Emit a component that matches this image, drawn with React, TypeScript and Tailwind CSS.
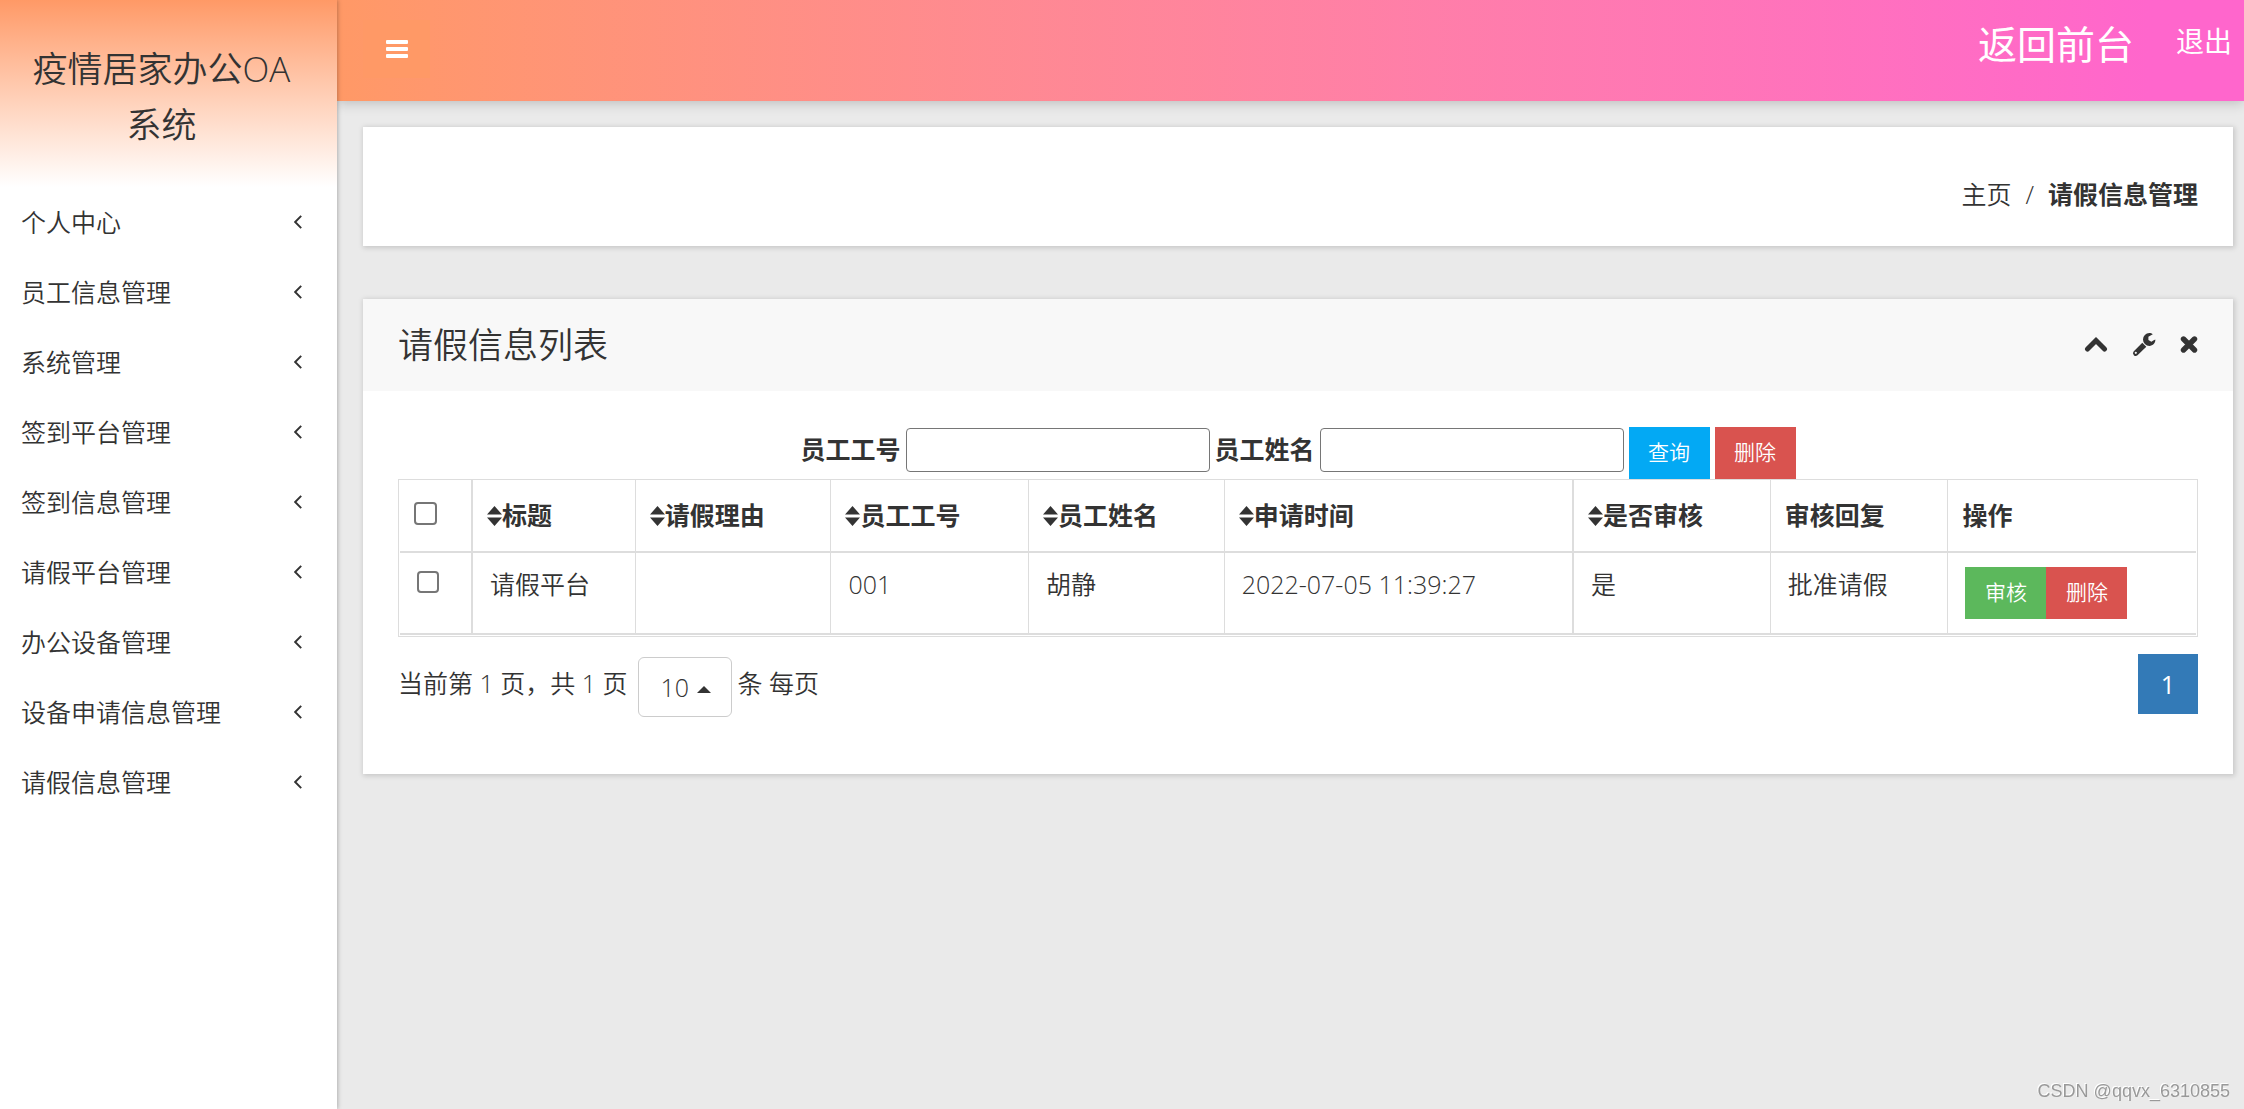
import { useState } from "react";

type Leave = {
  id: number;
  title: string;
  reason: string;
  jobNo: string;
  name: string;
  appliedAt: string;
  approved: string;
  reply: string;
};

const menus = [
  "个人中心",
  "员工信息管理",
  "系统管理",
  "签到平台管理",
  "签到信息管理",
  "请假平台管理",
  "办公设备管理",
  "设备申请信息管理",
  "请假信息管理",
];

const columns = [
  { label: "标题", sortable: true, className: "w-[9%]" },
  { label: "请假理由", sortable: true, className: "w-[10.9%] border-l" },
  { label: "员工工号", sortable: true, className: "w-[11%] border-l" },
  { label: "员工姓名", sortable: true, className: "w-[10.9%] border-l" },
  { label: "申请时间", sortable: true, className: "w-[19.4%] border-l" },
  { label: "是否审核", sortable: true, className: "w-[11%] border-l-2" },
  { label: "审核回复", sortable: false, className: "w-[9.9%] border-l" },
  { label: "操作", sortable: false, className: "border-l" },
];

const rows: Leave[] = [
  {
    id: 1,
    title: "请假平台",
    reason: "",
    jobNo: "001",
    name: "胡静",
    appliedAt: "2022-07-05 11:39:27",
    approved: "是",
    reply: "批准请假",
  },
];

const card = "bg-white shadow-[1px_1px_5px_1px_rgba(0,0,0,0.15)]";
const td = "border-b-2 border-[#ddd] px-[17px] py-3.5";
const btn = "h-[52px] w-[81px] pb-0.5 text-[21px] text-white";

function SortIcon() {
  return (
    <svg className="h-5 w-[15px] shrink-0" viewBox="0 0 15 20" fill="currentColor" aria-hidden="true">
      <path d="M7.500 0L15 8.500H0zM7.500 20L15 11.500H0z" />
    </svg>
  );
}

function BarsIcon() {
  return (
    <svg className="h-[18px] w-[22px]" viewBox="0 0 22 18" fill="currentColor" aria-hidden="true">
      <rect width="22" height="4" rx="1" />
      <rect y="7" width="22" height="4" rx="1" />
      <rect y="14" width="22" height="4" rx="1" />
    </svg>
  );
}

function AngleLeftIcon() {
  return (
    <svg className="h-3.5 w-2" viewBox="0 0 8 14" fill="none" stroke="currentColor" strokeWidth="1.9" aria-hidden="true">
      <path d="M7.200 0.800L1.200 7l6 6.200" />
    </svg>
  );
}

function ChevronUpIcon() {
  return (
    <svg className="h-6 w-6" viewBox="0 0 24 24" fill="none" stroke="currentColor" strokeWidth="5" aria-hidden="true">
      <path d="M3.500 16l8.500-8.500 8.500 8.500" strokeLinecap="round" />
    </svg>
  );
}

function WrenchIcon() {
  return (
    <svg className="h-6 w-6" viewBox="0 0 24 24" fill="currentColor" aria-hidden="true">
      <path
        fillRule="evenodd"
        d="M10.3 9.7l4 4-8.8 8.600a2.700 2.700 0 0 1-3.900-3.700zM4.900 19.800a1.100 1.100 0 1 0-2.200 0 1.100 1.100 0 0 0 2.200 0z"
      />
      <path d="M20.800 1.200l-4.400 2.500v3.300l3 1.700c1.200-.6 2.600-1.600 3.900-2.200.5 3.200-2.600 6.400-5.900 6.400a6.500 6.500 0 0 1-6.400-6.500A6.400 6.400 0 0 1 17.300 0c1.300 0 2.600.4 3.500 1.200z" />
    </svg>
  );
}

function CloseIcon() {
  return (
    <svg className="h-[18px] w-[18px]" viewBox="0 0 18 18" stroke="currentColor" strokeWidth="5.400" aria-hidden="true">
      <path d="M3.500 3l11 11M14.500 3l-11 11" strokeLinecap="round" />
    </svg>
  );
}

export default function App() {
  const [jobNo, setJobNo] = useState("");
  const [name, setName] = useState("");
  const [pageSize, setPageSize] = useState("10");
  const [selected, setSelected] = useState<number[]>([]);

  const toggle = (id: number) => {
    setSelected((prev) => (prev.includes(id) ? prev.filter((x) => x !== id) : [...prev, id]));
  };

  const toggleAll = () => {
    setSelected(selected.length === rows.length ? [] : rows.map((r) => r.id));
  };

  return (
    <div className="flex min-h-screen bg-[#eaeaea] font-['Open_Sans','Noto_Sans_CJK_SC',sans-serif] text-[25px] leading-[35px] font-[350] text-[#333]">
      <aside className="z-10 w-[337px] shrink-0 bg-white shadow-[1px_0_4px_rgba(0,0,0,0.25)]">
        <div className="h-[187px] bg-linear-to-b from-[#ff9966] to-white pt-[41px] pr-6 pl-2.5">
          <h1 className="text-center text-[35px] leading-[56px]">
            疫情居家办公OA
            <br />
            系统
          </h1>
        </div>
        <nav>
          <ul>
            {menus.map((menu) => (
              <li key={menu}>
                <a href="#" className="flex h-[70px] items-center justify-between pr-[35px] pl-[21px]">
                  <span>{menu}</span>
                  <AngleLeftIcon />
                </a>
              </li>
            ))}
          </ul>
        </nav>
      </aside>

      <div className="min-w-0 flex-1">
        <header className="flex h-[101px] items-start justify-between bg-linear-to-r from-[#ff9966] to-[#ff66cc] to-95% pr-3 pl-[26px] text-white shadow-[0_2px_12px_rgba(0,0,0,0.2)]">
          <button type="button" aria-label="菜单" className="mt-5 flex h-[58px] w-[67px] items-center justify-center bg-[#ff9966]">
            <BarsIcon />
          </button>
          <div className="flex items-start gap-[42px]">
            <a href="#" className="pt-4 text-[39px] leading-[56px] font-normal">
              返回前台
            </a>
            <a href="#" className="pt-6 text-[28px] font-normal">
              退出
            </a>
          </div>
        </header>

        <main className="pt-[26px] pr-[11px] pl-[26px]">
          <div className={`${card} flex h-[119px] items-center justify-end px-[35px] pt-4`}>
            <ol className="flex">
              <li>
                <a href="#">主页</a>
              </li>
              <li className="px-3.5">/</li>
              <li className="font-bold">请假信息管理</li>
            </ol>
          </div>

          <section className={`${card} mt-[53px]`}>
            <div className="flex h-[92px] items-center justify-between bg-[#f8f8f8] px-[35px]">
              <h2 className="text-[35px] leading-[56px]">请假信息列表</h2>
              <div className="flex items-center gap-6">
                <button type="button" aria-label="收起">
                  <ChevronUpIcon />
                </button>
                <button type="button" aria-label="设置">
                  <WrenchIcon />
                </button>
                <button type="button" aria-label="关闭">
                  <CloseIcon />
                </button>
              </div>
            </div>

            <div className="px-[35px] pt-9 pb-[57px]">
              <form className="flex items-start justify-center gap-[5px]" onSubmit={(e) => e.preventDefault()}>
                <label htmlFor="jobNo" className="pt-[5px] font-bold">
                  员工工号
                </label>
                <input
                  id="jobNo"
                  className="mt-px h-11 w-[304px] rounded border border-[#767676] bg-white px-1"
                  value={jobNo}
                  onChange={(e) => setJobNo(e.target.value)}
                />
                <label htmlFor="name" className="pt-[5px] font-bold">
                  员工姓名
                </label>
                <input
                  id="name"
                  className="mt-px h-11 w-[304px] rounded border border-[#767676] bg-white px-1"
                  value={name}
                  onChange={(e) => setName(e.target.value)}
                />
                <button type="submit" className={`${btn} bg-[#03a9f4]`}>
                  查询
                </button>
                <button type="button" className={`${btn} bg-[#d9534f]`}>
                  删除
                </button>
              </form>

              <div className="border border-[#ddd] px-px pb-px">
                <table className="w-full table-fixed border-separate border-spacing-0">
                  <thead>
                    <tr className="text-left">
                      <th className="w-[73px] border-r-2 border-b-2 border-[#ddd] px-3.5 pb-1">
                        <input
                          type="checkbox"
                          aria-label="全选"
                          className="block h-[23px] w-[23px] appearance-none rounded border-2 border-[#767676] bg-white checked:bg-[#0075ff]"
                          checked={selected.length === rows.length}
                          onChange={toggleAll}
                        />
                      </th>
                      {columns.map((col) => (
                        <th key={col.label} className={`${col.className} border-b-2 border-[#ddd] px-3.5 py-[18px] font-bold`}>
                          <span className="flex items-center">
                            {col.sortable && <SortIcon />}
                            {col.label}
                          </span>
                        </th>
                      ))}
                    </tr>
                  </thead>
                  <tbody>
                    {rows.map((row) => (
                      <tr key={row.id} className="align-top">
                        <td className={`${td} border-r-2`}>
                          <input
                            type="checkbox"
                            aria-label={row.title}
                            className="mt-1 block h-[22px] w-[22px] appearance-none rounded border-2 border-[#767676] bg-white checked:bg-[#0075ff]"
                            checked={selected.includes(row.id)}
                            onChange={() => toggle(row.id)}
                          />
                        </td>
                        <td className={td}>{row.title}</td>
                        <td className={`${td} border-l`}>{row.reason}</td>
                        <td className={`${td} border-l`}>{row.jobNo}</td>
                        <td className={`${td} border-l`}>{row.name}</td>
                        <td className={`${td} border-l`}>{row.appliedAt}</td>
                        <td className={`${td} border-l-2`}>{row.approved}</td>
                        <td className={`${td} border-l`}>{row.reply}</td>
                        <td className={`${td} border-l`}>
                          <div className="flex">
                            <button type="button" className={`${btn} bg-[#5cb85c]`}>
                              审核
                            </button>
                            <button type="button" className={`${btn} bg-[#d9534f]`}>
                              删除
                            </button>
                          </div>
                        </td>
                      </tr>
                    ))}
                  </tbody>
                </table>
              </div>

              <div className="flex items-start justify-between pt-[17px]">
                <div className="flex items-start">
                  <span className="pt-3">当前第 1 页，共 1 页</span>
                  <div className="relative mt-[3px] mr-1.5 ml-2.5">
                    <select
                      aria-label="每页条数"
                      className="h-[60px] w-[94px] appearance-none rounded-md border border-[#ccc] bg-white pl-[22px]"
                      value={pageSize}
                      onChange={(e) => setPageSize(e.target.value)}
                    >
                      <option>10</option>
                      <option>20</option>
                      <option>50</option>
                    </select>
                    <svg
                      className="pointer-events-none absolute top-[29px] right-[21px] h-[7px] w-3.5"
                      viewBox="0 0 14 7"
                      fill="currentColor"
                      aria-hidden="true"
                    >
                      <path d="M7 0l7 7H0z" />
                    </svg>
                  </div>
                  <span className="pt-3">条 每页</span>
                </div>
                <a href="#" className="flex h-[60px] w-[60px] items-center justify-center bg-[#337ab7] font-normal text-white">
                  1
                </a>
              </div>
            </div>
          </section>
        </main>
      </div>

      <p className="fixed right-3.5 bottom-1.5 z-20 font-['Liberation_Sans',sans-serif] text-[18px] leading-6 font-normal text-[#999] [text-shadow:-1px_-1px_0_#fff]">
        CSDN @qqvx_6310855
      </p>
    </div>
  );
}
